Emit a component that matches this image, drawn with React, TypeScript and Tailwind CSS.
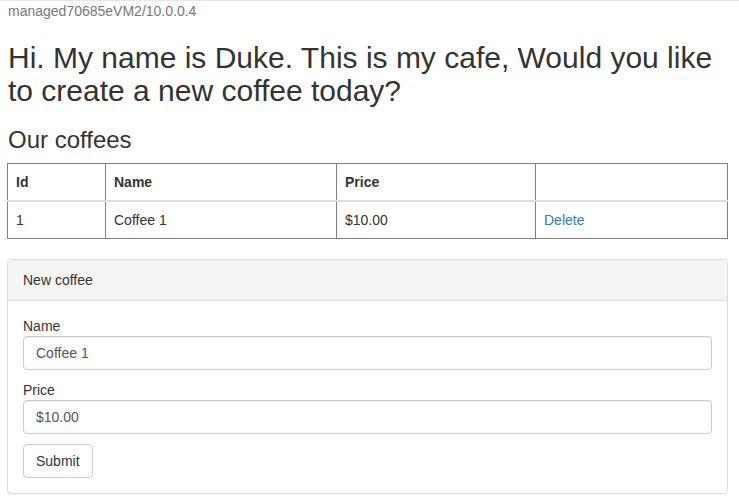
import { useState } from "react";

type Coffee = { id: number; name: string; price: string };

export default function App() {
  const [coffees, setCoffees] = useState<Coffee[]>([{ id: 1, name: "Coffee 1", price: "$10.00" }]);
  const [name, setName] = useState("Coffee 1");
  const [price, setPrice] = useState("$10.00");

  const handleDelete = (id: number) => {
    setCoffees(coffees.filter((c) => c.id !== id));
  };

  return (
    <div
      className="min-h-screen bg-white border-t border-[#e7e7e7] pl-[7px] pr-[11px] text-[14px] leading-[20px] text-[#333]"
      style={{ fontFamily: '"Liberation Sans", Arial, sans-serif' }}
    >
      <div className="pl-px text-[#777]">managed70685eVM2/10.0.0.4</div>

      <h2 className="mt-[20px] mb-[10px] pl-px text-[30px] leading-[33px] font-normal">
        Hi. My name is Duke. This is my cafe, Would you like to create a new coffee today?
      </h2>

      <h3 className="mt-[20px] mb-[10px] pl-px text-[24px] leading-[26.4px] font-normal">Our coffees</h3>

      <table className="w-full mb-[20px] border-collapse border border-[#808080]">
        <thead>
          <tr className="border-b-2 border-[#ddd]">
            <th className="w-[98px] border-x border-[#808080] px-[8px] py-[8px] text-left font-bold">Id</th>
            <th className="w-[231px] border-x border-[#808080] px-[8px] py-[8px] text-left font-bold">Name</th>
            <th className="w-[199px] border-x border-[#808080] px-[8px] py-[8px] text-left font-bold">Price</th>
            <th className="border-x border-[#808080] px-[8px] py-[8px]"></th>
          </tr>
        </thead>
        <tbody>
          {coffees.map((c) => (
            <tr key={c.id}>
              <td className="border-x border-[#808080] px-[8px] py-[8px]">{c.id}</td>
              <td className="border-x border-[#808080] px-[8px] py-[8px]">{c.name}</td>
              <td className="border-x border-[#808080] px-[8px] py-[8px]">{c.price}</td>
              <td className="border-x border-[#808080] px-[8px] py-[8px]">
                <a
                  className="text-[#337ab7] cursor-pointer hover:underline"
                  onClick={() => handleDelete(c.id)}
                >
                  Delete
                </a>
              </td>
            </tr>
          ))}
        </tbody>
      </table>

      <div className="border border-[#ddd] rounded-[4px] shadow-[0_1px_1px_rgba(0,0,0,0.05)]">
        <div className="bg-[#f5f5f5] border-b border-[#ddd] rounded-t-[3px] px-[15px] py-[10px]">New coffee</div>
        <form
          className="p-[15px]"
          onSubmit={(e) => {
            e.preventDefault();
            setCoffees([...coffees, { id: coffees.length + 1, name, price }]);
          }}
        >
          <div className="mb-[10px]">
            <label className="block">Name</label>
            <input
              value={name}
              onChange={(e) => setName(e.target.value)}
              className="block w-full h-[34px] px-[12px] py-[6px] border border-[#ccc] rounded-[4px] text-[#555] shadow-[inset_0_1px_1px_rgba(0,0,0,0.075)] outline-none"
            />
          </div>
          <div className="mb-[10px]">
            <label className="block">Price</label>
            <input
              value={price}
              onChange={(e) => setPrice(e.target.value)}
              className="block w-full h-[34px] px-[12px] py-[6px] border border-[#ccc] rounded-[4px] text-[#555] shadow-[inset_0_1px_1px_rgba(0,0,0,0.075)] outline-none"
            />
          </div>
          <button
            type="submit"
            className="h-[34px] px-[12px] py-[6px] border border-[#ccc] rounded-[4px] bg-white text-[#333] hover:bg-[#e6e6e6]"
          >
            Submit
          </button>
        </form>
      </div>
    </div>
  );
}
